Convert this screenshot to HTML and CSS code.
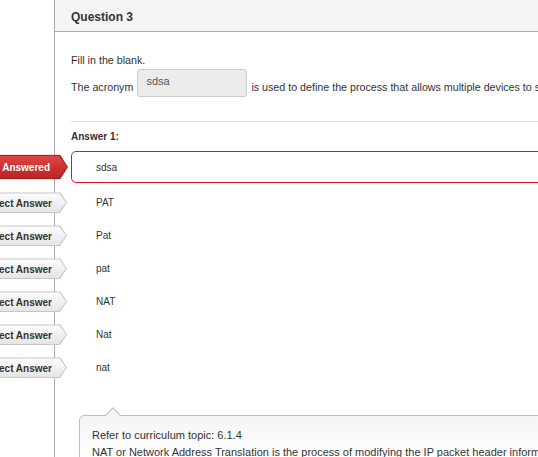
FILE: index.html
```html
<!DOCTYPE html>
<html lang="en">
<head>
<meta charset="utf-8">
<title>Question 3</title>
<link rel="stylesheet" href="styles.css">
</head>
<body>
<div class="page">
  <div class="gutter"></div>
  <main class="panel">
    <header class="qhead">Question 3</header>
    <section class="qbody">
      <p class="instr">Fill in the blank.</p>
      <div class="stem">
        <span class="stem-text">The acronym</span>
        <span class="blank">sdsa</span>
        <span class="stem-text">is used to define the process that allows multiple devices to share a single routable IP address.</span>
      </div>
      <hr class="sep">
      <div class="alabel">Answer 1:</div>
      <ul class="answers">
        <li class="ans yours"><span class="tag tag-red"><span>You Answered</span></span>sdsa</li>
        <li class="ans"><span class="tag"><span>Correct Answer</span></span>PAT</li>
        <li class="ans"><span class="tag"><span>Correct Answer</span></span>Pat</li>
        <li class="ans"><span class="tag"><span>Correct Answer</span></span>pat</li>
        <li class="ans"><span class="tag"><span>Correct Answer</span></span>NAT</li>
        <li class="ans"><span class="tag"><span>Correct Answer</span></span>Nat</li>
        <li class="ans"><span class="tag"><span>Correct Answer</span></span>nat</li>
      </ul>
      <div class="feedback">
        <p>Refer to curriculum topic: 6.1.4</p>
        <p>NAT or Network Address Translation is the process of modifying the IP packet header information while in transit.</p>
      </div>
    </section>
  </main>
</div>
</body>
</html>
```
FILE: styles.css
```css
html, body {
  margin: 0;
  padding: 0;
  background: #fff;
  overflow: hidden;
}
body {
  font-family: "Liberation Sans", Arial, sans-serif;
  color: #333;
}
.page {
  display: flex;
  width: 1000px;
  min-height: 457px;
}
.gutter {
  width: 54px;
  flex: none;
}
.panel {
  flex: 1;
  border-left: 1px solid #ababab;
  min-height: 457px;
}
.qhead {
  height: 32px;
  box-sizing: border-box;
  padding: 3px 0 0 16px;
  display: flex;
  align-items: center;
  background: #f4f4f4;
  border-bottom: 1px solid #ababab;
  font-size: 12px;
  font-weight: bold;
  color: #333;
}
.qbody {
  padding: 21px 0 0 16px;
}
.instr {
  margin: 0;
  font-size: 10.7px;
  line-height: 14px;
}
.stem {
  margin-top: 2px;
  display: flex;
  align-items: flex-end;
  gap: 4px;
  white-space: nowrap;
  font-size: 10.7px;
  line-height: 14px;
}
.stem-text {
  margin-bottom: 3px;
}
.blank {
  width: 110px;
  height: 28px;
  box-sizing: border-box;
  padding: 4px 0 0 8px;
  background: #ececec;
  border: 1px solid #cdcdcd;
  border-radius: 3px;
  font-size: 11px;
  color: #555;
}
.sep {
  margin: 24px 0 0 0;
  border: 0;
  border-top: 1px solid #dedede;
  height: 0;
}
.alabel {
  margin-top: 8px;
  font-size: 10px;
  line-height: 14px;
  font-weight: bold;
  color: #333;
}
.answers {
  list-style: none;
  margin: 7px 0 0 0;
  padding: 0;
}
.ans {
  position: relative;
  height: 33px;
  display: flex;
  align-items: center;
  padding-left: 25px;
  font-size: 10px;
  color: #333;
}
.ans.yours {
  height: 32px;
  box-sizing: border-box;
  border: 1px solid #e4141b;
  border-radius: 5px;
  padding-left: 24px;
  margin-bottom: 3px;
}
.tag {
  position: absolute;
  right: calc(100% + 4px);
  top: 50%;
  transform: translateY(-50%);
  height: 21px;
  padding: 0 15px 0 8px;
  display: flex;
  align-items: center;
  white-space: nowrap;
  font-size: 10px;
  font-weight: bold;
  color: #333;
  background: #c6c6c6;
  clip-path: polygon(0 0, calc(100% - 7px) 0, 100% 50%, calc(100% - 7px) 100%, 0 100%);
}
.ans.yours .tag {
  right: calc(100% + 4px);
}
.tag::before {
  content: "";
  position: absolute;
  top: 1px;
  bottom: 1px;
  left: 0;
  right: 1px;
  background: linear-gradient(#fdfdfd, #e4e4e4);
  clip-path: polygon(0 0, calc(100% - 7px) 0, 100% 50%, calc(100% - 7px) 100%, 0 100%);
}
.tag > span {
  position: relative;
}
.tag-red {
  height: 25px;
  padding-right: 18px;
  color: #fff;
  background: #a51d1d;
  clip-path: polygon(0 0, calc(100% - 8px) 0, 100% 50%, calc(100% - 8px) 100%, 0 100%);
}
.tag-red::before {
  background: linear-gradient(#e24545, #b82424);
  clip-path: polygon(0 0, calc(100% - 8px) 0, 100% 50%, calc(100% - 8px) 100%, 0 100%);
}
.feedback {
  position: relative;
  margin: 31px 0 0 8px;
  padding: 11px 12px 10px 12px;
  border: 1px solid #b9bdc4;
  border-radius: 5px;
  background: linear-gradient(#f5f5f6, #ffffff 40px);
  font-size: 11px;
  line-height: 17px;
  color: #333;
  white-space: nowrap;
}
.feedback p {
  margin: 0;
}
.feedback::before,
.feedback::after {
  content: "";
  position: absolute;
  left: 25px;
  width: 0;
  height: 0;
  border-left: 8px solid transparent;
  border-right: 8px solid transparent;
}
.feedback::before {
  top: -9px;
  border-bottom: 8px solid #c9ccd2;
}
.feedback::after {
  top: -7px;
  border-bottom: 8px solid #f5f5f6;
}
```
